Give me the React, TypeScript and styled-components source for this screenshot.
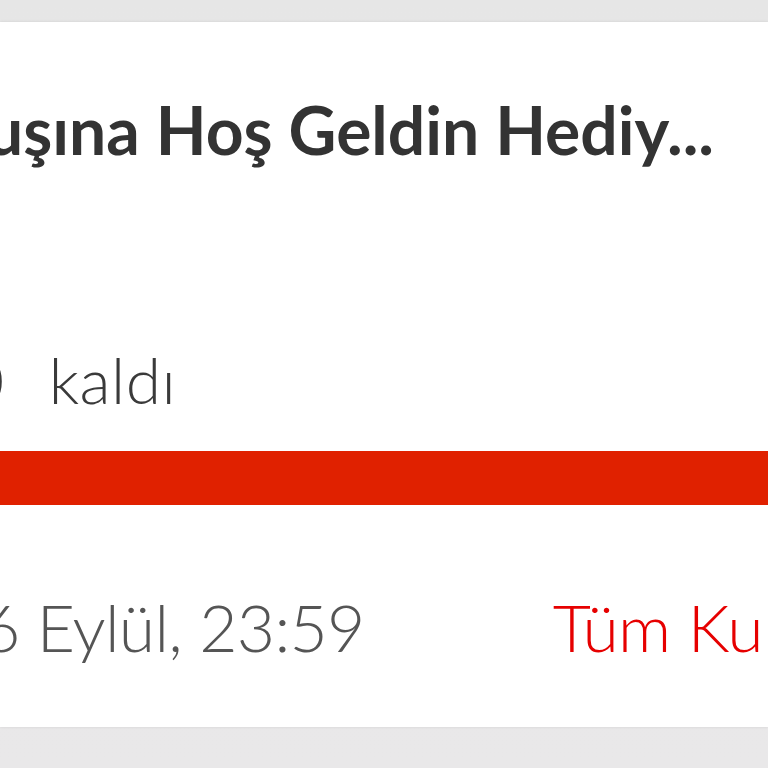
import React from "react";
import styled, { createGlobalStyle } from "styled-components";

const GlobalStyle = createGlobalStyle`
  html, body {
    margin: 0;
    padding: 0;
    background: #e6e6e6;
  }
  body {
    font-family: Lato, "Noto Sans", sans-serif;
  }
`;

const SPage = styled.div`
  width: 768px;
  height: 768px;
  overflow: hidden;
  padding-top: 22px;
  box-sizing: border-box;
  background: linear-gradient(#e6e6e6, #e9e8e9);
`;

const SCard = styled.div`
  background: #ffffff;
  height: 705px;
  overflow: hidden;
  box-shadow: 0 0 3px rgba(0, 0, 0, 0.1);
  display: flex;
  flex-direction: column;
`;

const STitle = styled.div`
  margin-top: 68px;
  margin-left: -14px;
  font-size: 66px;
  line-height: 80px;
  font-weight: 700;
  color: #333333;
  white-space: nowrap;
`;

const SRemaining = styled.div`
  margin-top: 175px;
  display: flex;
  align-items: baseline;
  font-size: 64px;
  line-height: 70px;
  font-weight: 300;
  letter-spacing: 0.5px;
  color: #3a3a3a;
  white-space: nowrap;
`;

const SCount = styled.span`
  margin-left: -33px;
  margin-right: 44px;
`;

const SBar = styled.div`
  margin-top: 36px;
  height: 54px;
  background: #e02100;
`;

const SFooter = styled.div<{ $gap: number }>`
  margin-top: 84px;
  display: flex;
  align-items: baseline;
  gap: ${(p) => p.$gap}px;
  font-size: 66px;
  line-height: 76px;
  font-weight: 300;
  letter-spacing: -0.7px;
  white-space: nowrap;
`;

const SDate = styled.span`
  margin-left: -18px;
  color: #555555;
`;

const SLink = styled.span`
  color: #e60000;
`;

export default function App() {
  return (
    <>
      <GlobalStyle />
      <SPage>
        <SCard>
          <STitle>uşına Hoş Geldin Hediy...</STitle>
          <SRemaining>
            <SCount>0</SCount>
            <span>kaldı</span>
          </SRemaining>
          <SBar />
          <SFooter $gap={188}>
            <SDate>6 Eylül, 23:59</SDate>
            <SLink>Tüm Kuponlar</SLink>
          </SFooter>
        </SCard>
      </SPage>
    </>
  );
}
